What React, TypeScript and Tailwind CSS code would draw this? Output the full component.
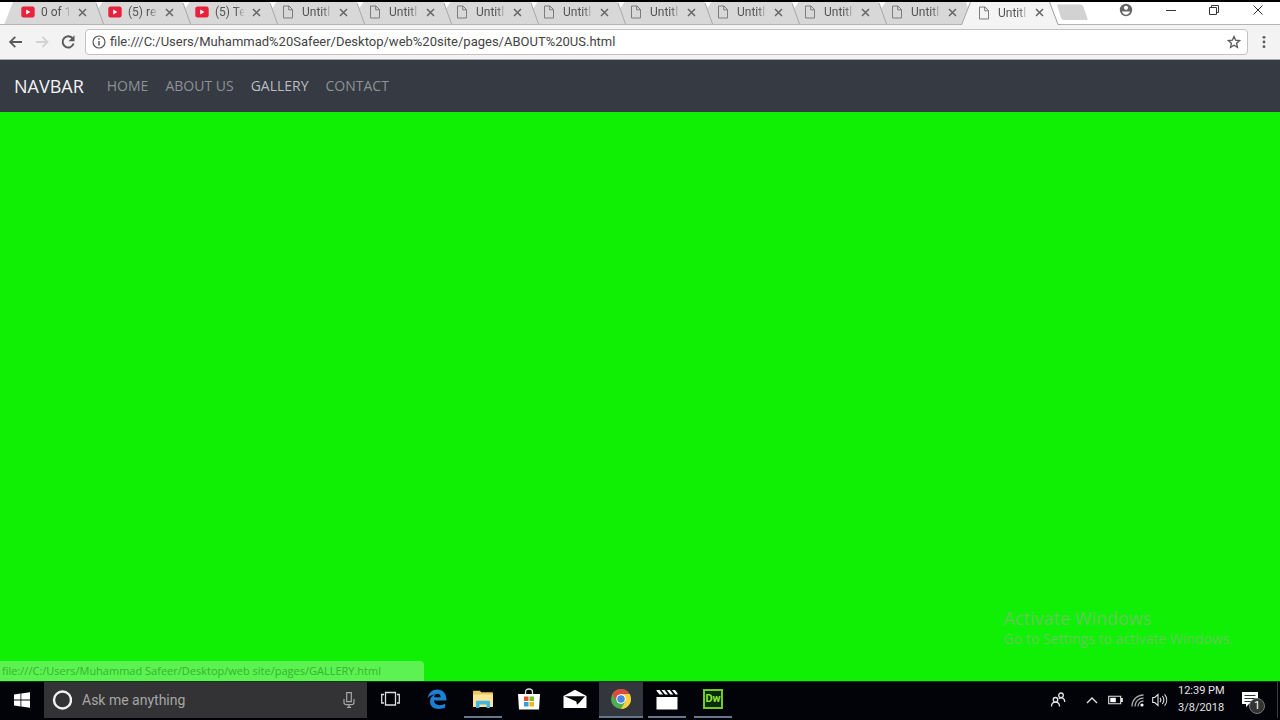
import type { ReactNode } from 'react'

type Tab = { icon: 'video' | 'file'; title: string }

const TABS: Tab[] = [
  { icon: 'video', title: '0 of 1' },
  { icon: 'video', title: '(5) re' },
  { icon: 'video', title: '(5) Te' },
  ...Array.from({ length: 8 }, (): Tab => ({ icon: 'file', title: 'Untitl' })),
]

const LINKS = ['HOME', 'ABOUT US', 'GALLERY', 'CONTACT']

function VideoIcon() {
  return (
    <svg viewBox="0 0 14 12" className="h-3 w-3.5 shrink-0">
      <rect x="0.3" y="0.6" width="13.4" height="10.8" rx="2.2" fill="#e8213c" />
      <path d="M5.2 3.6v5l4.2-2.5z" fill="#fff" />
    </svg>
  )
}

function FileIcon() {
  return (
    <svg viewBox="0 0 14 14" className="h-3.5 w-3.5 shrink-0" fill="none" stroke="#7c7c7c">
      <path d="M1.5 1h5.5l3.5 3.5V13h-9z" />
      <path d="M6.7 1v3.8h3.8" />
    </svg>
  )
}

function Cross() {
  return (
    <svg viewBox="0 0 9 9" className="h-[9px] w-[9px]" stroke="#666" strokeWidth="1.5">
      <path d="M1 1l7 7M8 1L1 8" />
    </svg>
  )
}

function TabContent({ tab }: { tab: Tab }) {
  return (
    <>
      <span className="flex w-5 shrink-0 justify-start">
        {tab.icon === 'video' ? <VideoIcon /> : <FileIcon />}
      </span>
      <span className="w-[30px] shrink-0 overflow-hidden whitespace-nowrap [mask-image:linear-gradient(to_right,black_70%,transparent)]">
        {tab.title}
      </span>
      <button aria-label="Close tab" className="ml-[7px] shrink-0">
        <Cross />
      </button>
    </>
  )
}

function TabStrip() {
  return (
    <div className="flex h-[23px] shrink-0 bg-white text-xs text-[#555]">
      <svg viewBox="0 0 17 23" className="h-[23px] w-[17px] shrink-0">
        <path d="M4 23L13 0H17V23z" fill="#d8d8d8" />
        <path d="M0 22.5H17" stroke="#b4b4b4" />
      </svg>
      {TABS.map((tab, i) => (
        <div key={i} className="flex w-[87px] shrink-0 items-center border-b border-[#b4b4b4] bg-[#d8d8d8] pb-0.5 pl-1">
          <TabContent tab={tab} />
          {i < TABS.length - 1 ? (
            <svg viewBox="0 0 9 22" className="ml-auto -mb-0.5 h-[22px] w-[9px] shrink-0">
              <path d="M0.5 0H7.5L3.6 6z" fill="#fff" />
              <path d="M1 1L8.5 22" stroke="#a8a8a8" fill="none" />
            </svg>
          ) : (
            <svg viewBox="0 0 13 23" className="ml-auto -mb-[3px] h-[23px] w-[13px] shrink-0">
              <path d="M9 0L0 23H13V0z" fill="#f4f4f4" />
              <path d="M5 0H9L7 6z" fill="#fff" />
              <path d="M9.5 0L0.5 23" stroke="#a0a0a0" fill="none" />
            </svg>
          )}
        </div>
      ))}
      <div className="flex w-[86px] shrink-0 items-center bg-[#f4f4f4] pb-0.5 pl-1">
        <TabContent tab={{ icon: 'file', title: 'Untitl' }} />
        <svg viewBox="0 0 12 23" className="ml-auto -mb-0.5 h-[23px] w-3 shrink-0">
          <path d="M2 0L11 23H12V0z" fill="#fff" />
          <path d="M1.5 0L10 22.5H12" stroke="#a0a0a0" fill="none" />
        </svg>
      </div>
      <div className="flex flex-1 border-b border-[#b4b4b4]">
        <button aria-label="New tab" className="-ml-1 self-start pt-0.5">
          <svg viewBox="0 0 32 17" className="h-[17px] w-8">
            <path d="M1 .5H24c2 0 3 1 3.500 2.500L31.500 14.500c.3 1-.3 1.500-1.500 1.500H8c-1.500 0-2.500-.8-3-2z" fill="#d2d2d2" />
          </svg>
        </button>
        <div className="-mt-1.5 ml-auto flex items-center text-[#333]">
          <button aria-label="Profile" className="flex w-[46px] justify-center">
            <svg viewBox="0 0 14 14" className="h-3.5 w-3.5">
              <circle cx="7" cy="7" r="6.200" fill="#666" />
              <circle cx="7" cy="4.800" r="2.100" fill="#fff" />
              <path d="M2.800 8.600h8.400c-.8 2-2.300 3.200-4.200 3.200s-3.400-1.200-4.200-3.200z" fill="#fff" />
            </svg>
          </button>
          <button aria-label="Minimize" className="flex w-[44px] justify-center">
            <svg viewBox="0 0 10 10" className="h-2.5 w-2.5" stroke="currentColor">
              <path d="M0 5.500h10" />
            </svg>
          </button>
          <button aria-label="Restore" className="flex w-[42px] justify-center">
            <svg viewBox="0 0 10 10" className="h-2.5 w-2.5" stroke="currentColor" fill="none">
              <path d="M.5 2.500h7v7h-7zM2.500 2.500v-2h7v7h-2" />
            </svg>
          </button>
          <button aria-label="Close" className="flex w-[45px] justify-center">
            <svg viewBox="0 0 10 10" className="h-2.5 w-2.5" stroke="currentColor">
              <path d="M.5.5l9 9M9.500.5l-9 9" />
            </svg>
          </button>
        </div>
      </div>
    </div>
  )
}

function Toolbar() {
  return (
    <div className="flex h-[35px] shrink-0 items-center border-b border-[#a9a9ad] bg-[#f3f3f4] pl-2">
      <button aria-label="Back" className="w-[26px]">
        <svg viewBox="0 0 16 16" className="h-4 w-4" fill="none" stroke="#5a5a5a" strokeWidth="1.8">
          <path d="M14 8H2.500M7.300 2.800L2.100 8l5.200 5.200" />
        </svg>
      </button>
      <button aria-label="Forward" className="w-[26px]">
        <svg viewBox="0 0 16 16" className="h-4 w-4" fill="none" stroke="#d2d2d2" strokeWidth="1.800">
          <path d="M2 8h11.500M8.500 3l5 5-5 5" />
        </svg>
      </button>
      <button aria-label="Reload" className="w-[25px]">
        <svg viewBox="0 0 16 16" className="h-4 w-4" fill="none" stroke="#5a5a5a" strokeWidth="1.900">
          <path d="M12.500 4.200A5.600 5.600 0 1 0 13.600 9.500" />
          <path d="M14.500 1.200v6H8.500z" fill="#5a5a5a" stroke="none" />
        </svg>
      </button>
      <div className="flex h-[26px] flex-1 items-center rounded-sm border border-[#c2c2c2] bg-white px-1.5">
        <svg viewBox="0 0 14 14" className="h-3.5 w-3.5 shrink-0" fill="none" stroke="#5a5a5a">
          <circle cx="7" cy="7" r="6" strokeWidth="1.200" />
          <path d="M7 6v4.500M7 3.300v1.500" strokeWidth="1.500" />
        </svg>
        <input
          aria-label="Address"
          className="ml-1 min-w-0 flex-1 bg-transparent text-[13px] text-[#444] outline-none"
          defaultValue="file:///C:/Users/Muhammad%20Safeer/Desktop/web%20site/pages/ABOUT%20US.html"
        />
        <button aria-label="Bookmark">
          <svg viewBox="0 0 14 14" className="h-3.5 w-3.5" fill="none" stroke="#5a5a5a" strokeWidth="1.300">
            <path d="M7 1.500l1.600 3.700 4 .4-3 2.700.9 4L7 10.200l-3.500 2.100.9-4-3-2.700 4-.4z" />
          </svg>
        </button>
      </div>
      <button aria-label="Menu" className="flex w-8 justify-center">
        <svg viewBox="0 0 4 14" className="h-3.5 w-1" fill="#5a5a5a">
          <circle cx="2" cy="2.300" r="1.400" />
          <circle cx="2" cy="7" r="1.400" />
          <circle cx="2" cy="11.700" r="1.400" />
        </svg>
      </button>
    </div>
  )
}

function TaskButton({ label, open, active, children }: { label: string; open?: boolean; active?: boolean; children: ReactNode }) {
  return (
    <button
      aria-label={label}
      className={`flex w-11 flex-col items-center ${active ? 'bg-[#33363c]' : ''}`}
    >
      <span className="flex flex-1 items-center">{children}</span>
      <span className={`h-0.5 ${active ? 'w-11' : 'w-[38px]'} ${open ? 'bg-[#64788f]' : ''}`} />
    </button>
  )
}

function Taskbar() {
  return (
    <footer className="flex h-[39px] shrink-0 border-t border-[#0c3a10] bg-[#020308] pb-0.5">
      <button aria-label="Start" className="flex w-11 items-center justify-center">
        <svg viewBox="0 0 16 16" className="h-4 w-4" fill="#fff">
          <path d="M0 2.500l6.500-.9v6H0zM7.300 1.500L16 .3v7.300H7.300zM0 8.400h6.500v6L0 13.500zM7.300 8.400H16v7.300l-8.700-1.200z" />
        </svg>
      </button>
      <label className="flex w-[323px] items-center bg-[#333335] pr-3 pl-2">
        <svg viewBox="0 0 20 20" className="h-5 w-5 shrink-0" fill="none">
          <circle cx="10.500" cy="10" r="8.500" stroke="#f2f2f2" strokeWidth="2.400" />
        </svg>
        <input
          aria-label="Search"
          placeholder="Ask me anything"
          className="ml-2.5 min-w-0 flex-1 bg-transparent text-sm outline-none placeholder:text-[#a6a6a6]"
        />
        <svg viewBox="0 0 12 16" className="h-4 w-3 shrink-0" fill="none" stroke="#a6a6a6" strokeWidth="1.200">
          <path d="M3.700.7h4.600v9H3.700zM1 7v3.500C1 12 2 12.700 3.500 12.700h5C10 12.700 11 12 11 10.500V7M6 12.700v2.800M4 15.300h4" />
        </svg>
      </label>
      <div className="flex gap-0.5 pl-0.5">
        <TaskButton label="Task view">
          <svg viewBox="0 0 20 16" className="h-4 w-5" fill="none" stroke="#ddd" strokeWidth="1.300">
            <path d="M4.500 1.500h10v12.500h-10zM3 3.500H.700v8.500H3M16 3.500h2.300v8.500H16" />
          </svg>
        </TaskButton>
        <TaskButton label="Edge">
          <svg viewBox="0 0 20 20" className="h-5 w-5" fill="#1b7fd3">
            <path d="M.7 9C1.500 3.500 5.500.4 10.300.4c5.500 0 9 4 9 9.200v2H7c.2 3 2.500 4.600 5.700 4.600 2 0 3.900-.6 5.500-1.600v4c-2 1-4.200 1.400-6.500 1.400-5.500 0-8.700-3-8.700-7.500 0-3.200 1.800-5.700 4.900-7.100C5.300 5.500 2.500 6.500.7 9zM7.100 8.300h6.500c0-2.400-1-3.600-3.100-3.600-1.900 0-3.200 1.500-3.400 3.600z" />
          </svg>
        </TaskButton>
        <TaskButton label="File Explorer" open>
          <svg viewBox="0 0 22 18" className="h-[18px] w-[22px]">
            <path d="M1 1.500C1 1 1.300.7 1.800.7h6l1.500 1.500H20c.5 0 1 .4 1 1V17H1z" fill="#e9c764" />
            <path d="M1 4.500h20V17H1z" fill="#fbe398" />
            <path d="M4 18v-6c0-.8.500-1.300 1.300-1.300h11.400c.8 0 1.300.5 1.300 1.300v6h-3.500v-3.500h-7V18z" fill="#45b4e0" />
          </svg>
        </TaskButton>
        <TaskButton label="Store">
          <svg viewBox="0 0 22 22" className="h-[22px] w-[22px]">
            <path d="M7.500 7V4c0-1.800 1.300-3 3.500-3s3.500 1.200 3.500 3v3" fill="none" stroke="#ddd" strokeWidth="1.300" />
            <path d="M0 6h22l-1 15.500H1z" fill="#fff" />
            <path d="M6 8.500h4.500v4.500H6z" fill="#e5512c" />
            <path d="M11.500 8.500H16v4.500h-4.500z" fill="#7fb62a" />
            <path d="M6 14h4.500v4.500H6z" fill="#2f9fe0" />
            <path d="M11.500 14H16v4.500h-4.500z" fill="#f6b51d" />
          </svg>
        </TaskButton>
        <TaskButton label="Mail">
          <svg viewBox="0 0 24 20" className="h-5 w-6">
            <path d="M.5 7L12 .8 23.500 7v12H.5z" fill="#fff" />
            <path d="M1.500 7.300L22 7.300 16.500 13.500 14 15.800l-.700-3.300z" fill="#05060a" />
          </svg>
        </TaskButton>
        <TaskButton label="Chrome" open active>
          <svg viewBox="0 0 20 20" className="h-5 w-5">
            <circle cx="10" cy="10" r="10" fill="#4caf50" />
            <path d="M1.340 5A10 10 0 0 1 18.660 5H10L5.670 12.500z" fill="#dd4b3e" />
            <path d="M18.660 5A10 10 0 0 1 10 20l4.330-7.500L10 5z" fill="#fbd03c" />
            <circle cx="10" cy="10" r="4.800" fill="#fff" />
            <circle cx="10" cy="10" r="3.800" fill="#4a86e8" />
          </svg>
        </TaskButton>
        <TaskButton label="Movies" open>
          <svg viewBox="0 0 22 22" className="h-[22px] w-[22px]" fill="#fff">
            <path d="M.5 9h21v12.500H.5zM.5 2l3 0 3.500 4.500H3.500L.5 2.800zM5.500 2h3l3.500 4.500H9zM10.800 2h3l3.500 4.500h-3zM16 2h3l2.500 3.200v1.300h-2z" />
          </svg>
        </TaskButton>
        <TaskButton label="Dreamweaver" open>
          <span className="flex h-5 w-5 items-center justify-center border-2 border-[#72c928] bg-[#0c2b0a] text-[11px] font-bold text-[#8fe63c]">
            Dw
          </span>
        </TaskButton>
      </div>
      <div className="ml-auto flex items-center text-[#e4e4e4]">
        <button aria-label="People" className="mr-5">
          <svg viewBox="0 0 16 16" className="h-4 w-4" fill="none" stroke="currentColor" strokeWidth="1.300">
            <circle cx="5.500" cy="7.800" r="2.300" />
            <path d="M1.500 14.500c0-2.700 1.500-4.400 4-4.400s4 1.700 4 4.400" />
            <circle cx="11" cy="3.300" r="2.300" />
            <path d="M8.800 6.500c2.800-1.800 6-.2 6 3.500" />
          </svg>
        </button>
        <button aria-label="Hidden icons" className="mr-2.5">
          <svg viewBox="0 0 12 8" className="h-2 w-3" fill="none" stroke="currentColor" strokeWidth="1.300">
            <path d="M1 7l5-5 5 5" />
          </svg>
        </button>
        <svg viewBox="0 0 15 10" className="mr-2 h-2.5 w-[15px]">
          <path d="M.7 1.200h12v7.600H.7zM13.300 3.500h1v3h-1z" fill="none" stroke="currentColor" strokeWidth="1.100" />
          <path d="M2.300 2.800h5.500v4.400H2.300z" fill="#fff" />
        </svg>
        <svg viewBox="0 0 13 13" className="mr-2 h-[13px] w-[13px]" fill="none" stroke="#a8a8a8" strokeWidth="1.300">
          <path d="M1 12.500C1 6 6 1 12.500 1M4 12.500C4 7.500 7.500 4 12.500 4M7 12.500C7 9.500 9.500 7 12.500 7" />
          <circle cx="11" cy="11" r="1.600" fill="#fff" stroke="none" />
        </svg>
        <svg viewBox="0 0 16 14" className="mr-2.5 h-3.5 w-4" fill="none" stroke="currentColor" strokeWidth="1.100">
          <path d="M.7 4.500h2L6 1.500v11L2.700 9.500h-2zM8 4.800c1 1.300 1 3.100 0 4.400M10.300 3c1.900 2.400 1.900 5.600 0 8M12.600 1.300c2.800 3.400 2.800 8 0 11.400" />
        </svg>
        <div className="w-[46px] pb-0.5 text-center text-[11px] leading-[17px] whitespace-nowrap">
          <p>12:39 PM</p>
          <p>3/8/2018</p>
        </div>
        <button aria-label="Notifications" className="relative mt-1 mr-3 ml-[17px] h-6 w-6">
          <svg viewBox="0 0 24 24" className="h-6 w-6">
            <path d="M1 2h16v12H8l-3 3v-3H1z" fill="#fff" />
            <path d="M3.500 5.500h11M3.500 8.500h11M3.500 11.500h8" stroke="#333" />
          </svg>
          <span className="absolute right-0 bottom-0 flex h-4 w-4 items-center justify-center rounded-full border border-[#777] bg-[#333] text-[11px] text-white">
            1
          </span>
        </button>
        <span className="mr-0.5 h-full w-px bg-[#3c3c3f]" />
      </div>
    </footer>
  )
}

export default function App() {
  return (
    <div className="flex h-screen flex-col overflow-hidden border-t-2 border-black bg-white font-[Roboto,sans-serif]">
      <TabStrip />
      <Toolbar />
      <nav className="flex h-[52px] shrink-0 items-center bg-[#353a43] pl-3.5 font-['Open_Sans',sans-serif]">
        <a href="#" className="mr-[23px] text-lg text-[#f2f2f3]">
          NAVBAR
        </a>
        <div className="flex gap-[17px] text-sm">
          {LINKS.map((link) => (
            <a key={link} href="#" className={link === 'GALLERY' ? 'text-[#babcc0]' : 'text-[#8e9196]'}>
              {link}
            </a>
          ))}
        </div>
      </nav>
      <main className="relative flex-1 bg-[#10f004]">
        <div className="absolute right-[47px] bottom-8 font-['Open_Sans',sans-serif] text-[#62ca58]">
          <p className="text-lg leading-[22px]">Activate Windows</p>
          <p className="text-sm leading-5">Go to Settings to activate Windows.</p>
        </div>
        <div className="absolute bottom-0 left-0 h-5 w-[424px] rounded-tr-sm bg-[#5bf252] pl-0.5 font-['Open_Sans',sans-serif] text-[11px] leading-5 whitespace-nowrap text-[#35b52d]">
          file:///C:/Users/Muhammad Safeer/Desktop/web site/pages/GALLERY.html
        </div>
      </main>
      <Taskbar />
    </div>
  )
}
